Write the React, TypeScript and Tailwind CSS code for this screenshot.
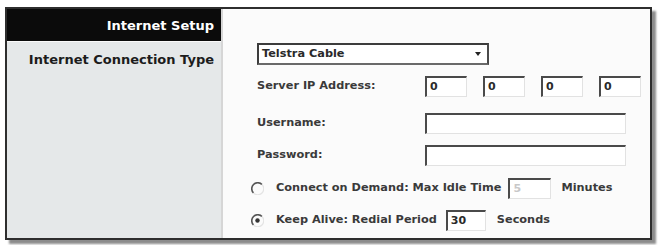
import React from 'react'

const font = { fontFamily: '"DejaVu Sans", "Liberation Sans", sans-serif' }

// inset text box, classic win9x look: dark top/left, light bottom/right
function Box({ w, value, dim }: { w: string; value?: string; dim?: boolean }) {
  return (
    <div
      className={`${w} h-[21px] border-t-2 border-l-2 border-b border-r border-t-[#4a4a4a] border-l-[#4a4a4a] border-b-[#e2e2e2] border-r-[#e2e2e2] bg-white flex items-center pl-[3px] text-[11px] font-bold ${dim ? 'text-[#c8c8c8]' : 'text-[#2a2a2a]'}`}
    >
      {value}
    </div>
  )
}

function Radio({ checked }: { checked?: boolean }) {
  return (
    <svg width="13" height="13" viewBox="0 0 13 13" className="shrink-0">
      <path d="M11 2.5 A5.5 5.5 0 0 0 2.5 11" fill="none" stroke="#555" strokeWidth="1.6" />
      <path d="M2.5 11 A5.5 5.5 0 0 0 11 2.5" fill="none" stroke="#e4e4e4" strokeWidth="1.2" />
      {checked && <circle cx="6.5" cy="6.5" r="2.2" fill="#333" />}
    </svg>
  )
}

export default function App() {
  return (
    <div className="w-[662px] h-[245px] bg-white pl-[5px] pt-[7px] overflow-hidden" style={font}>
      <div className="w-[647px] h-[233px] border-2 border-[#2e2e2e] shadow-[4px_4px_2px_rgba(0,0,0,0.45)] flex">
        {/* left column */}
        <div className="w-[214px] flex flex-col">
          <div className="h-[32px] bg-[#0b0b0b] flex items-center justify-end pr-[7px]">
            <span className="text-white text-[13px] font-bold leading-none">Internet Setup</span>
          </div>
          <div className="flex-1 bg-[#e5e8e9] border-t border-[#fafafa] pt-[5px] pr-[7px] text-right">
            <span className="text-[#1c1c1c] text-[13px] font-bold leading-[16px]">
              Internet Connection Type
            </span>
          </div>
        </div>

        {/* right panel */}
        <div className="flex-1 bg-[#fbfbfb] border-l-2 border-[#d6d6d6] pl-[34px] pt-[34px] flex flex-col text-[11.3px] font-bold text-[#3a3a3a]">
          <div className="w-[232px] h-[22px] border-2 border-t-[#3c3c3c] border-l-[#3c3c3c] border-b-[#6a6a6a] border-r-[#4a4a4a] bg-white flex items-center justify-between pl-[3px] pr-[2px]">
            <span className="text-[#2a2a2a]">Telstra Cable</span>
            <svg width="14" height="14" viewBox="0 0 14 14">
              <path d="M4 5 L10 5 L7 9 Z" fill="#222" />
            </svg>
          </div>

          <div className="flex items-center mt-[11px] h-[21px]">
            <span className="w-[168px]">Server IP Address:</span>
            <div className="flex gap-[16px]">
              <Box w="w-[42px]" value="0" />
              <Box w="w-[42px]" value="0" />
              <Box w="w-[42px]" value="0" />
              <Box w="w-[42px]" value="0" />
            </div>
          </div>

          <div className="flex items-center mt-[16px] h-[21px]">
            <span className="w-[168px]">Username:</span>
            <Box w="w-[201px]" />
          </div>

          <div className="flex items-center mt-[11px] h-[21px]">
            <span className="w-[168px]">Password:</span>
            <Box w="w-[201px]" />
          </div>

          <div className="flex items-center mt-[12px] h-[21px] -ml-[6px]">
            <Radio />
            <span className="ml-[12px] mr-[7px]">Connect on Demand: Max Idle Time</span>
            <Box w="w-[43px]" value="5" dim />
            <span className="ml-[10px]">Minutes</span>
          </div>

          <div className="flex items-center mt-[11px] h-[21px] -ml-[6px]">
            <Radio checked />
            <span className="ml-[12px] mr-[9px]">Keep Alive: Redial Period</span>
            <Box w="w-[40px]" value="30" />
            <span className="ml-[11px]">Seconds</span>
          </div>
        </div>
      </div>
    </div>
  )
}
